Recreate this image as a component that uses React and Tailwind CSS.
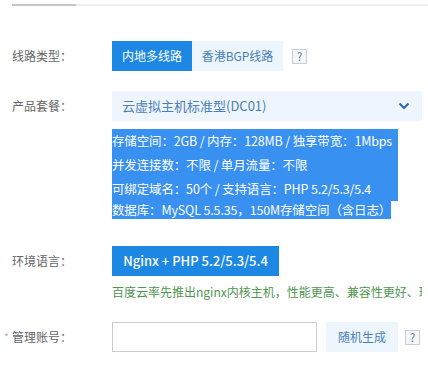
import React from 'react';

const font = { fontFamily: '"Noto Sans CJK SC", "Noto Sans", sans-serif' };

function Help() {
  return (
    <span className="flex h-[15px] w-[15px] items-center justify-center border border-[#c9ced4] bg-[#f4f7fa] text-[11px] leading-none text-[#5f7386]">
      ?
    </span>
  );
}

function Label({ children, required }) {
  return (
    <div className="relative w-[100px] shrink-0 text-[12px] text-[#666]">
      {required && <span className="absolute left-[-8px] top-[1px] text-[10px] text-[#aaa]">*</span>}
      {children}
    </div>
  );
}

export default function App() {
  return (
    <div className="h-[367px] w-[428px] overflow-hidden bg-white pt-[4px]" style={font}>
      {/* tab underline */}
      <div className="flex h-[2px]">
        <div className="ml-[12px] w-[64px] bg-[#c6c6c6]" />
        <div className="flex-1 bg-[#eeeeee]" />
      </div>

      <div className="pl-[12px] pr-[6px]">
        {/* 线路类型 */}
        <div className="mt-[35px] flex h-[30px] items-center">
          <Label>线路类型：</Label>
          <button className="h-[30px] w-[80px] bg-[#1c88e4] text-[12px] text-white">内地多线路</button>
          <button className="h-[30px] w-[91px] bg-[#edf5fd] text-[12px] text-[#4b7fb8]">香港BGP线路</button>
          <div className="ml-[9px]">
            <Help />
          </div>
        </div>

        {/* 产品套餐 */}
        <div className="mt-[20px] flex h-[30px] items-center">
          <Label>产品套餐：</Label>
          <div className="flex h-[30px] flex-1 items-center justify-between bg-[#eef5fc] pl-[10px] pr-[12px] text-[13px] text-[#4b7fb8]">
            <span>云虚拟主机标准型(DC01)</span>
            <svg width="12" height="8" viewBox="0 0 12 8" fill="none">
              <path d="M1.5 1.5 L6 6 L10.5 1.5" stroke="#2a6cae" strokeWidth="2.2" />
            </svg>
          </div>
        </div>

        {/* 套餐说明 */}
        <div className="ml-[100px] mt-[8px] w-[286px] text-[12.5px] tracking-[-0.15px] text-white">
          <div className="bg-[#3890f0] leading-[24px]">
            <div className="whitespace-nowrap">存储空间：2GB / 内存：128MB / 独享带宽：1Mbps</div>
            <div className="whitespace-nowrap">并发连接数：不限 / 单月流量：不限</div>
            <div className="whitespace-nowrap">可绑定域名：50个 / 支持语言：PHP 5.2/5.3/5.4</div>
          </div>
          <div className="flex">
            <span className="whitespace-nowrap bg-[#3890f0] leading-[18px]">数据库：MySQL 5.5.35，150M存储空间（含日志）</span>
          </div>
        </div>

        {/* 环境语言 */}
        <div className="mt-[27px] flex h-[30px] items-center">
          <Label>环境语言：</Label>
          <button className="h-[30px] w-[167px] bg-[#1c88e4] text-[13px] font-medium text-white">Nginx + PHP 5.2/5.3/5.4</button>
        </div>
        <div className="ml-[100px] mt-[7px] overflow-hidden whitespace-nowrap text-[12px] leading-[18px] text-[#4f9650]">
          百度云率先推出nginx内核主机，性能更高、兼容性更好、环
        </div>

        {/* 管理账号 */}
        <div className="mt-[21px] flex h-[30px] items-center">
          <Label required>管理账号：</Label>
          <input className="h-[30px] w-[205px] border border-[#cccccc] bg-white px-2 text-[12px] outline-none" />
          <button className="ml-[9px] h-[30px] w-[72px] bg-[#edf5fd] text-[12px] text-[#4b7fb8]">随机生成</button>
          <div className="ml-[7px]">
            <Help />
          </div>
        </div>
      </div>
    </div>
  );
}
